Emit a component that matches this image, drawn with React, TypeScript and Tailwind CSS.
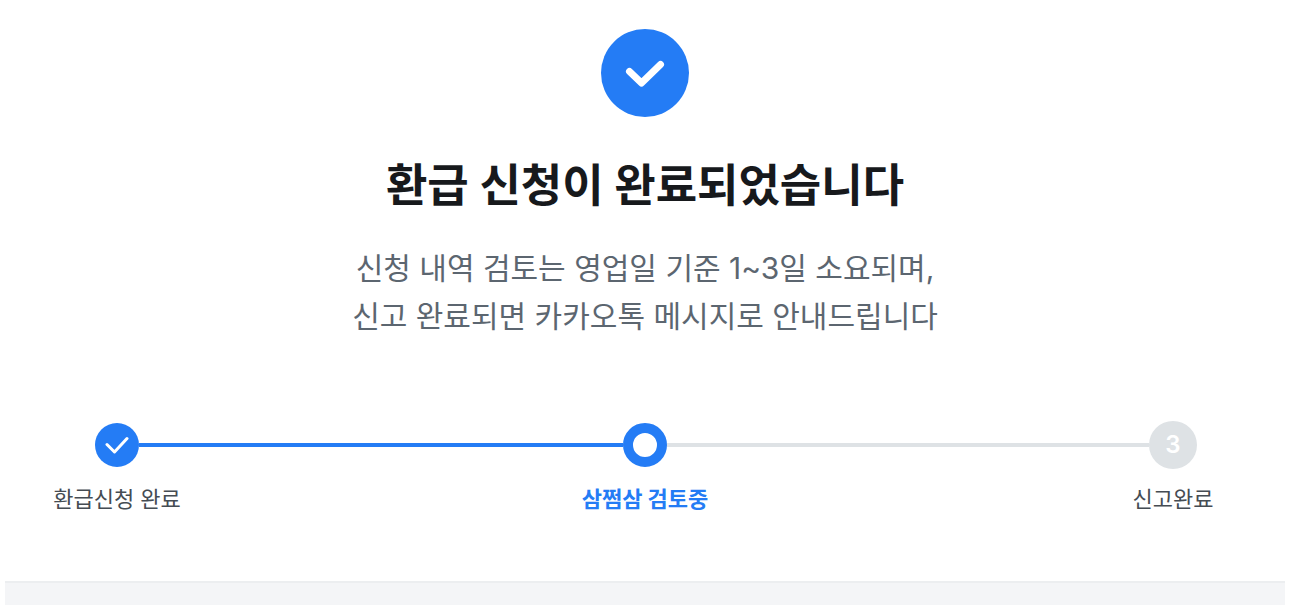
import { Fragment } from 'react';
import clsx from 'clsx';

type StepStatus = 'done' | 'current' | 'upcoming';

const STEPS: { label: string; status: StepStatus }[] = [
  { label: '환급신청 완료', status: 'done' },
  { label: '삼쩜삼 검토중', status: 'current' },
  { label: '신고완료', status: 'upcoming' },
];

function StepMarker({ status, index }: { status: StepStatus; index: number }) {
  if (status === 'done') {
    return (
      <span className="flex size-11 items-center justify-center rounded-full bg-[#247cf5]">
        <svg width="24" height="24" viewBox="0 0 24 24" fill="none" aria-hidden="true">
          <path d="M2 11.5L9.5 19L22 5.5" stroke="white" strokeWidth="3" strokeLinecap="round" strokeLinejoin="round" />
        </svg>
      </span>
    );
  }
  if (status === 'current') {
    return <span className="size-11 rounded-full border-10 border-[#247cf5] bg-white" />;
  }
  return (
    <span className="flex size-12 items-center justify-center rounded-full bg-[#dee2e5] text-2xl font-semibold text-white">
      {index + 1}
    </span>
  );
}

// A null status leaves the space empty, before the first and after the last step
function Connector({ status }: { status: StepStatus | null }) {
  return (
    <span
      className={clsx(
        'h-1 flex-1',
        status === 'upcoming' && 'bg-[#dee2e5]',
        (status === 'done' || status === 'current') && 'bg-[#247cf5]',
      )}
    />
  );
}

export default function App() {
  return (
    <div className="bg-white pr-[9px] pl-[5px] font-['Inter','Noto_Sans_CJK_KR',sans-serif]">
      <main className="flex flex-col items-center pt-[29px]">
        <div className="flex size-22 items-center justify-center rounded-full bg-[#247cf5]">
          <svg width="40" height="40" viewBox="0 0 40 40" fill="none" aria-hidden="true">
            <path d="M4.5 18.5L16.5 30L35.5 11.5" stroke="white" strokeWidth="7" strokeLinecap="round" strokeLinejoin="round" />
          </svg>
        </div>

        <h1 className="mt-[37px] text-center text-[45px] leading-16 font-bold text-[#17191c]">
          환급 신청이 완료되었습니다
        </h1>
        <p className="mt-[26px] text-center text-[30px] leading-12 text-[#5c6670]">
          신청 내역 검토는 영업일 기준 1~3일 소요되며,
          <br />
          신고 완료되면 카카오톡 메시지로 안내드립니다
        </p>

        <ol className="mt-[81px] flex w-full">
          {STEPS.map((step, i) => {
            const next = STEPS[i + 1];
            return (
              <Fragment key={step.label}>
                <li className="flex w-56 flex-col items-center">
                  <div className="flex h-12 w-full items-center">
                    <Connector status={i === 0 ? null : step.status} />
                    <StepMarker status={step.status} index={i} />
                    <Connector status={next ? next.status : null} />
                  </div>
                  <span
                    className={clsx(
                      'mt-3 text-[22px] leading-9',
                      step.status === 'current' ? 'font-bold text-[#247cf5]' : 'text-[#454c53]',
                    )}
                  >
                    {step.label}
                  </span>
                </li>
                {next && (
                  <li aria-hidden="true" className="flex h-12 flex-1 items-center">
                    <Connector status={next.status} />
                  </li>
                )}
              </Fragment>
            );
          })}
        </ol>
      </main>
      <div className="mt-16 h-6 border-t-2 border-[#eceef0] bg-[#f4f5f7]" />
    </div>
  );
}
